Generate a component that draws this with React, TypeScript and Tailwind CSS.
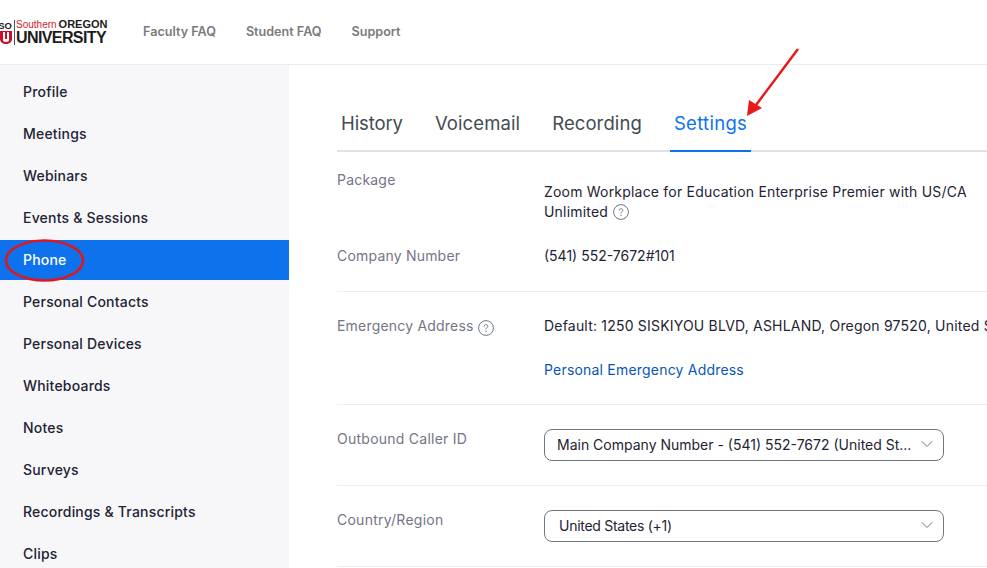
import React from "react";
import { ChevronDown } from "lucide-react";

const navItems = [
  "Profile",
  "Meetings",
  "Webinars",
  "Events & Sessions",
  "Phone",
  "Personal Contacts",
  "Personal Devices",
  "Whiteboards",
  "Notes",
  "Surveys",
  "Recordings & Transcripts",
  "Clips",
];

function HelpIcon() {
  return (
    <svg width="16" height="16" viewBox="0 0 16 16" fill="none" className="inline-block shrink-0">
      <circle cx="8" cy="8" r="7.4" stroke="#6e7680" strokeWidth="1" />
      <path d="M6.2 6.3c0-1 .8-1.7 1.8-1.7s1.8.7 1.8 1.6c0 1.3-1.8 1.4-1.8 2.8" stroke="#6e7680" strokeWidth="1" strokeLinecap="round" />
      <circle cx="8" cy="11.2" r=".7" fill="#6e7680" />
    </svg>
  );
}

function Logo() {
  return (
    <div className="flex items-center w-[108px] h-[26px] font-['Liberation_Sans',sans-serif]">
      <div className="w-[12px] shrink-0 flex flex-col items-end">
        <span className="text-[9.5px] leading-[11px] font-bold text-[#222]">SO</span>
        <svg width="12" height="13" viewBox="0 0 12 13" className="block">
          <path d="M0 0h12v8c0 3-3 5-6 5S0 11 0 8z" fill="#c8102e" />
          <path d="M3 1h2v7h2V1h2v8c0 1-1 2-3 2S3 10 3 9z" fill="#fff" />
        </svg>
      </div>
      <div className="w-px h-[25px] bg-[#555] mx-[1.5px] shrink-0" />
      <div className="flex flex-col whitespace-nowrap">
        <div className="leading-[11px] flex items-baseline">
          <span className="text-[10px] text-[#d01c2e]">Southern</span>
          <span className="ml-[2px] text-[11px] font-bold text-[#1c1c1c]">OREGON</span>
        </div>
        <div className="text-[16px] leading-[15px] font-bold text-[#1c1c1c] tracking-[-0.6px]">UNIVERSITY</div>
      </div>
    </div>
  );
}

function Select({ value, cls }: { value: string; cls: string }) {
  return (
    <div className={`w-[400px] h-[32px] rounded-lg border border-[#6e7680] flex items-center justify-between pr-[6px] pb-[2px] text-[14px] text-[#232333] ${cls}`}>
      <span className="whitespace-nowrap">{value}</span>
      <ChevronDown size={20} strokeWidth={1.2} className="text-[#6e7680]" />
    </div>
  );
}

export default function App() {
  return (
    <div className="relative w-[987px] h-[568px] overflow-hidden bg-white font-['Inter',sans-serif]">
      <header className="h-[65px] border-b border-[#ebebf0] flex items-center">
        <Logo />
        <nav className="flex items-center gap-[30px] ml-[35px] text-[12.6px] font-semibold text-[#7a7a7e]">
          <span>Faculty FAQ</span>
          <span>Student FAQ</span>
          <span>Support</span>
        </nav>
      </header>

      <div className="flex h-[503px]">
        {/* sidebar */}
        <aside className="w-[289px] shrink-0 bg-[#f7f7fa] pt-[7px] flex flex-col gap-[2px]">
          {navItems.map((item) => (
            <div
              key={item}
              className={
                item === "Phone"
                  ? "h-[40px] shrink-0 pl-[23px] pb-[2px] flex items-center text-[14px] tracking-[0.2px] font-medium bg-[#0e72ed] text-white"
                  : "h-[40px] shrink-0 pl-[23px] pb-[2px] flex items-center text-[14px] tracking-[0.2px] font-medium text-[#232333]"
              }
            >
              {item}
            </div>
          ))}
        </aside>

        {/* main */}
        <main className="flex-1 min-w-0 pl-[48px] pt-[37px]">
          <div className="h-[50px] border-b-2 border-[#dfe3e8] flex gap-[24px] text-[18.5px] text-[#444b53]">
            <div className="px-[4px] pt-[8px] tracking-[-0.1px]">History</div>
            <div className="px-[4px] pt-[8px] tracking-[0.1px]">Voicemail</div>
            <div className="px-[4px] pt-[8px] tracking-[0.1px]">Recording</div>
            <div className="px-[4px] pt-[8px] h-[50px] tracking-[0.3px] text-[#0e72ed] border-b-2 border-[#0e72ed]">Settings</div>
          </div>

          <section className="h-[140px] border-b border-[#ededf4] flex flex-col tracking-[0.2px]">
            <div className="flex">
              <div className="w-[207px] shrink-0 pt-[18px] text-[14px] leading-[20px] text-[#747487]">Package</div>
              <div className="pt-[30px] text-[14px] leading-[20px] text-[#232333]">
                <div className="whitespace-nowrap">Zoom Workplace for Education Enterprise Premier with US/CA</div>
                <div className="flex items-center gap-[5px]">
                  Unlimited
                  <HelpIcon />
                </div>
              </div>
            </div>
            <div className="flex mt-[24px] text-[14px] leading-[20px]">
              <div className="w-[207px] shrink-0 text-[#747487]">Company Number</div>
              <div className="text-[#232333] tracking-normal">(541) 552-7672#101</div>
            </div>
          </section>

          <section className="h-[113px] border-b border-[#ededf4] flex pt-[24px] text-[14px] leading-[20px] tracking-[0.2px]">
            <div className="w-[207px] shrink-0 text-[#747487] flex items-start gap-[4px]">
              <span>Emergency Address</span>
              <span className="mt-[1px]"><HelpIcon /></span>
            </div>
            <div className="min-w-0">
              <div className="text-[#232333] whitespace-nowrap">Default: 1250 SISKIYOU BLVD, ASHLAND, Oregon 97520, United States</div>
              <div className="mt-[24px] text-[#0956b5]">Personal Emergency Address</div>
            </div>
          </section>

          <section className="h-[81px] border-b border-[#ededf4] flex items-start pt-[24px] text-[14px]">
            <div className="w-[207px] shrink-0 text-[#747487] leading-[20px] tracking-[0.25px]">Outbound Caller ID</div>
            <Select value="Main Company Number - (541) 552-7672 (United St..." cls="pl-[12px]" />
          </section>

          <section className="h-[81px] border-b border-[#ededf4] flex items-start pt-[24px] text-[14px]">
            <div className="w-[207px] shrink-0 text-[#747487] leading-[20px] tracking-[0.25px]">Country/Region</div>
            <Select value="United States (+1)" cls="pl-[14px] tracking-[-0.28px]" />
          </section>
        </main>
      </div>

      {/* annotations drawn over the screenshot */}
      <svg className="absolute inset-0 pointer-events-none" width="987" height="568" fill="none">
        <ellipse cx="44.5" cy="260.5" rx="38.5" ry="20" stroke="#e0161f" strokeWidth="2.6" />
        <path d="M798 49 L756 105" stroke="#e8191c" strokeWidth="2.5" />
        <path d="M747 116 L749 100 L762 108 Z" fill="#e8191c" />
      </svg>
    </div>
  );
}
